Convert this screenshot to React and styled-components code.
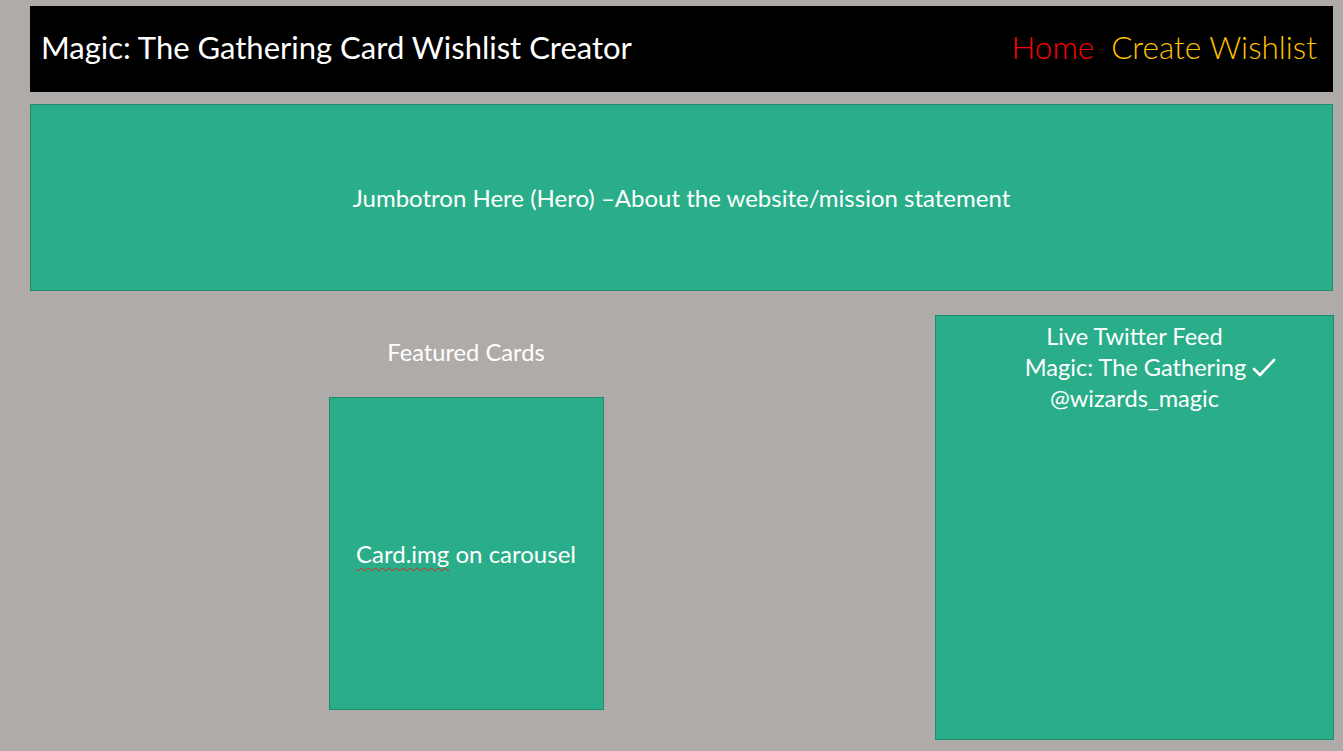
import React from "react";
import styled, { createGlobalStyle } from "styled-components";

const GlobalStyle = createGlobalStyle`
  html, body {
    margin: 0;
    padding: 0;
    background-color: #afaba9;
  }
  body {
    font-family: "Lato", "Open Sans", sans-serif;
    color: #ffffff;
  }
`;

export const Page = styled.div`
  width: 1303px;
  padding: 6px 0 0 30px;
  display: flex;
  flex-direction: column;
`;

export const Header = styled.header`
  height: 86px;
  background-color: #000000;
  display: flex;
  align-items: center;
  justify-content: space-between;
  padding: 0 16px 4px 11px;
  box-sizing: border-box;
`;

export const Title = styled.h1`
  margin: 0;
  font-size: 31px;
  font-weight: 400;
  color: #ffffff;
`;

export const Nav = styled.nav`
  display: flex;
  gap: 17px;
`;

export const NavLink = styled.a`
  font-size: 31.5px;
  font-weight: 300;
  color: ${(props) => props.color};
  text-decoration: none;
`;

export const Jumbotron = styled.section`
  margin-top: 12px;
  height: 187px;
  background-color: #2aae8a;
  border: 1px solid #1f8b6d;
  box-sizing: border-box;
  display: flex;
  align-items: center;
  justify-content: center;
  font-size: 24px;
`;

export const Bottom = styled.div`
  margin-top: 24px;
  display: grid;
  grid-template-columns: 872px 399px;
  column-gap: 33px;
`;

export const Featured = styled.div`
  display: flex;
  flex-direction: column;
  align-items: center;
  padding-top: 23px;
`;

export const Heading = styled.h2`
  margin: 0;
  font-size: 23.7px;
  font-weight: 400;
  line-height: 28px;
`;

export const Card = styled.div`
  margin-top: 31px;
  width: 275px;
  height: 313px;
  box-sizing: border-box;
  background-color: #2aae8a;
  border: 1px solid #1f8b6d;
  display: flex;
  align-items: center;
  justify-content: center;
  font-size: 24px;
`;

export const Squiggle = styled.span`
  text-decoration: underline wavy #e0241b;
  text-decoration-thickness: 1px;
  text-underline-offset: 4px;
`;

export const Feed = styled.aside`
  height: 425px;
  box-sizing: border-box;
  background-color: #2aae8a;
  border: 1px solid #1f8b6d;
  display: flex;
  flex-direction: column;
  align-items: center;
  padding-top: 5px;
  font-size: 23.6px;
  line-height: 31px;
`;

export const FeedLine = styled.div`
  display: flex;
  align-items: center;
  gap: 6px;
  margin-left: ${(props) => props.$shift || 0}px;
`;

const Check = () => (
  <svg width="24" height="20" viewBox="0 0 24 20" fill="none">
    <path d="M2 11 L8 17 L22 2" stroke="#ffffff" strokeWidth="2.6" strokeLinecap="round" strokeLinejoin="round" />
  </svg>
);

export default function App() {
  return (
    <>
      <GlobalStyle />
      <Page>
        <Header>
          <Title>Magic: The Gathering Card Wishlist Creator</Title>
          <Nav>
            <NavLink color="#ff0000">Home</NavLink>
            <NavLink color="#ffc000">Create Wishlist</NavLink>
          </Nav>
        </Header>
        <Jumbotron>Jumbotron Here (Hero) –About the website/mission statement</Jumbotron>
        <Bottom>
          <Featured>
            <Heading>Featured Cards</Heading>
            <Card>
              <span>
                <Squiggle>Card.img</Squiggle> on carousel
              </span>
            </Card>
          </Featured>
          <Feed>
            <FeedLine>Live Twitter Feed</FeedLine>
            <FeedLine $shift={32}>
              Magic: The Gathering <Check />
            </FeedLine>
            <FeedLine>@wizards_magic</FeedLine>
          </Feed>
        </Bottom>
      </Page>
    </>
  );
}
